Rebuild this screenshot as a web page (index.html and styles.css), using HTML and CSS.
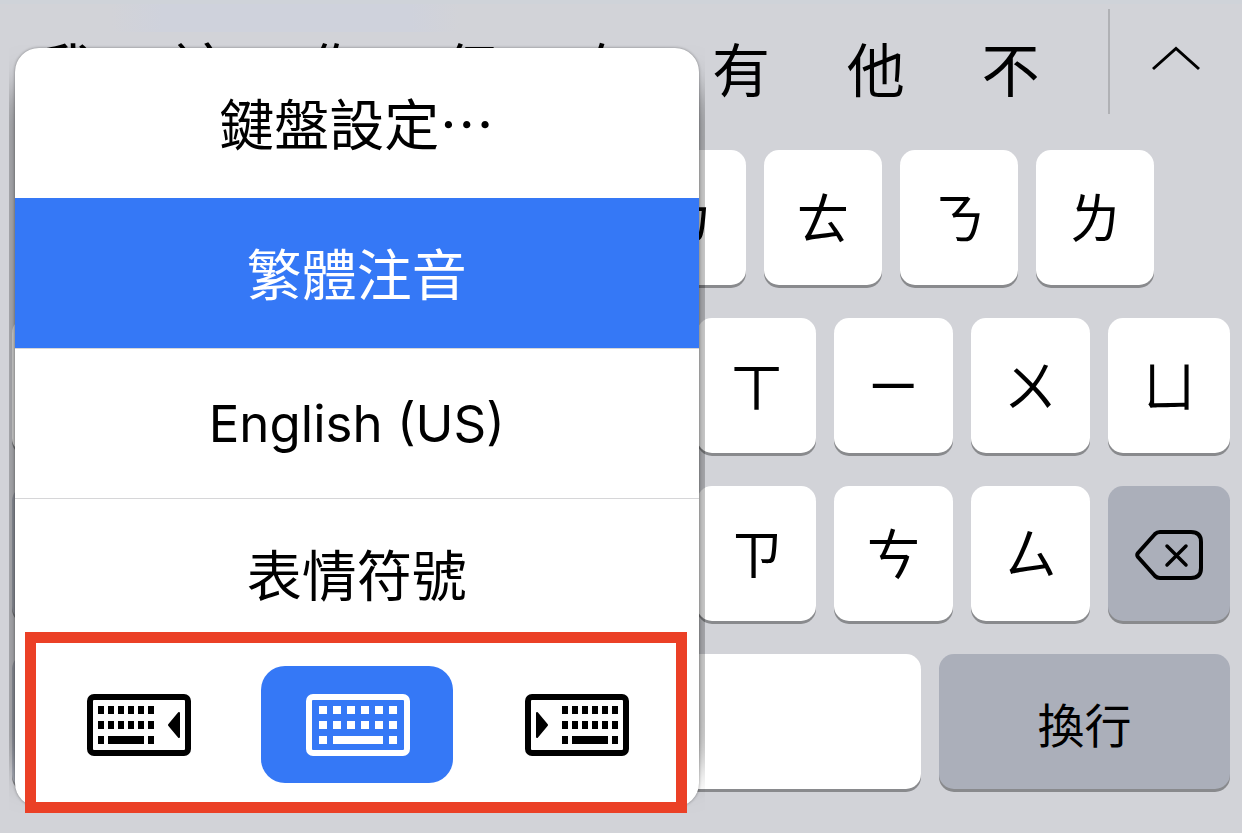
FILE: index.html
```html
<!DOCTYPE html>
<html lang="zh-Hant">
<head>
<meta charset="utf-8">
<meta name="viewport" content="width=device-width, initial-scale=1">
<title>注音鍵盤</title>
<link rel="stylesheet" href="styles.css">
</head>
<body>
<main class="keyboard">
  <div class="candidates">
    <div class="candidate-list">
      <button class="candidate">我</button>
      <button class="candidate">這</button>
      <button class="candidate">你</button>
      <button class="candidate">但</button>
      <button class="candidate">在</button>
      <button class="candidate">有</button>
      <button class="candidate">他</button>
      <button class="candidate">不</button>
    </div>
    <button class="expand" aria-label="展開">
      <svg width="50" height="26" viewBox="0 0 50 26"><path d="M2 24 25 3.500 48 24" fill="none" stroke="#000" stroke-width="3"/></svg>
    </button>
  </div>

  <div class="rows">
    <div class="row row-inset">
      <button class="key">ㄅ</button>
      <button class="key">ㄆ</button>
      <button class="key">ㄇ</button>
      <button class="key">ㄈ</button>
      <button class="key">ㄉ</button>
      <button class="key">ㄊ</button>
      <button class="key">ㄋ</button>
      <button class="key">ㄌ</button>
    </div>
    <div class="row">
      <button class="key">ㄍ</button>
      <button class="key">ㄎ</button>
      <button class="key">ㄏ</button>
      <button class="key">ㄐ</button>
      <button class="key">ㄑ</button>
      <button class="key">ㄒ</button>
      <button class="key">ㄧ</button>
      <button class="key">ㄨ</button>
      <button class="key">ㄩ</button>
    </div>
    <div class="row">
      <button class="key key-dark" aria-label="符號"></button>
      <button class="key">ㄓ</button>
      <button class="key">ㄔ</button>
      <button class="key">ㄕ</button>
      <button class="key">ㄖ</button>
      <button class="key">ㄗ</button>
      <button class="key">ㄘ</button>
      <button class="key">ㄙ</button>
      <button class="key key-dark" aria-label="刪除">
        <svg width="68" height="50" viewBox="0 0 68 50" fill="none" stroke="#000" stroke-width="4" stroke-linecap="round" stroke-linejoin="round"><path d="M25 2H56Q66 2 66 12V38Q66 48 56 48H25Q22 48 20 46L3 27Q1.500 25 3 23L20 4Q22 2 25 2Z"/><path d="M32 16 51 35M51 16 32 35" stroke-width="3.500"/></svg>
      </button>
    </div>
    <div class="row row-bottom">
      <button class="key key-dark" aria-label="數字"></button>
      <button class="key key-dark" aria-label="切換鍵盤"></button>
      <button class="key" aria-label="空格"></button>
      <button class="key key-dark key-return">換行</button>
    </div>
  </div>

  <div class="menu-layer">
    <div class="menu-clip">
      <div class="menu">
        <button class="menu-item">鍵盤設定⋯</button>
        <button class="menu-item selected">繁體注音</button>
        <button class="menu-item latin" lang="en">English (US)</button>
        <button class="menu-item">表情符號</button>
        <div class="modes">
          <button class="mode" aria-label="靠左鍵盤">
            <svg width="104" height="62" viewBox="0 0 104 62" fill="currentColor">
              <rect x="3" y="3" width="98" height="56" rx="4" fill="none" stroke="currentColor" stroke-width="6"/>
              <path d="M11 12h6v8h-6zM21 12h6v8h-6zM31 12h6v8h-6zM41 12h6v8h-6zM51 12h6v8h-6zM61 12h6v8h-6zM11 27h6v8h-6zM21 27h6v8h-6zM31 27h6v8h-6zM41 27h6v8h-6zM51 27h6v8h-6zM61 27h6v8h-6zM11 42h6v8h-6zM21 42h36v8H21zM61 42h6v8h-6z"/>
              <path d="M92 19V43L82 31Z" stroke="currentColor" stroke-width="2" stroke-linejoin="round"/>
            </svg>
          </button>
          <button class="mode selected" aria-label="標準鍵盤">
            <svg width="104" height="62" viewBox="0 0 104 62" fill="currentColor">
              <rect x="3" y="3" width="98" height="56" rx="4" fill="none" stroke="currentColor" stroke-width="6"/>
              <path d="M13 12h8v8h-8zM27 12h8v8h-8zM41 12h8v8h-8zM55 12h8v8h-8zM69 12h8v8h-8zM83 12h8v8h-8zM13 27h8v8h-8zM27 27h8v8h-8zM41 27h8v8h-8zM55 27h8v8h-8zM69 27h8v8h-8zM83 27h8v8h-8zM13 42h8v8h-8zM27 42h50v8H27zM83 42h8v8h-8z"/>
            </svg>
          </button>
          <button class="mode" aria-label="靠右鍵盤">
            <svg width="104" height="62" viewBox="0 0 104 62" fill="currentColor">
              <rect x="3" y="3" width="98" height="56" rx="4" fill="none" stroke="currentColor" stroke-width="6"/>
              <path d="M37 12h6v8h-6zM47 12h6v8h-6zM57 12h6v8h-6zM67 12h6v8h-6zM77 12h6v8h-6zM87 12h6v8h-6zM37 27h6v8h-6zM47 27h6v8h-6zM57 27h6v8h-6zM67 27h6v8h-6zM77 27h6v8h-6zM87 27h6v8h-6zM37 42h6v8h-6zM47 42h36v8H47zM87 42h6v8h-6z"/>
              <path d="M12 19V43L22 31Z" stroke="currentColor" stroke-width="2" stroke-linejoin="round"/>
            </svg>
          </button>
        </div>
      </div>
    </div>
    <div class="callout"></div>
  </div>
</main>
</body>
</html>
```

FILE: styles.css
```css
* {
  box-sizing: border-box;
}

body {
  margin: 0;
  background: #d2d3d8;
  color: #000;
  font-family: "Noto Sans CJK TC", sans-serif;
}

button {
  margin: 0;
  padding: 0;
  border: 0;
  background: none;
  color: inherit;
  font: inherit;
}

svg {
  display: block;
}

.keyboard {
  position: relative;
  min-height: 100vh;
  overflow: hidden;
  background:
    linear-gradient(#cfd3d9, #cfd3d9) 0 0 / 100% 4px no-repeat,
    linear-gradient(90deg, transparent 9%, #cfd2dc 13%, #cfd2dc 33%, transparent 37%) 0 0 / 100% 32px no-repeat,
    #d2d3d8;
}

.candidates {
  display: flex;
  height: 150px;
  padding: 9px 0 36px;
}

.candidate-list {
  display: flex;
  flex: 1;
  padding-right: 30px;
  border-right: 2px solid #b0b1b5;
}

.candidate {
  flex: 1;
  padding-top: 11px;
  font-size: 58px;
  line-height: 78px;
}

.expand {
  display: flex;
  justify-content: center;
  width: 132px;
  padding-top: 36px;
}

.rows {
  display: grid;
  gap: 33px;
  padding: 0 12px 44px;
}

.row {
  display: grid;
  grid-template-columns: repeat(8, 1fr) 122px;
  gap: 18px;
}

.row-inset {
  grid-template-columns: repeat(8, 1fr);
  padding: 0 76px 0 72px;
}

.row-bottom {
  grid-template-columns: 118px 118px 1fr 291px;
}

.key {
  display: flex;
  align-items: center;
  justify-content: center;
  height: 135px;
  padding-bottom: 4px;
  border-radius: 15px;
  background: #fff;
  box-shadow: 0 3px #898a8d;
  font-size: 54px;
  line-height: 64px;
}

.key-dark {
  padding: 3px 0 0;
  background: #abafba;
}

.key-return {
  font-size: 47px;
}

.menu-layer {
  position: absolute;
  top: 45px;
  left: 9px;
  width: 56%;
}

.menu-clip {
  position: relative;
  overflow: hidden;
  padding: 3px 6px 6px;
}

.menu-clip::before {
  position: absolute;
  inset: 40px 6px;
  border-radius: 24px;
  box-shadow: 0 0 36px rgba(0, 0, 0, 0.6);
  content: "";
}

.menu {
  position: relative;
  overflow: hidden;
  border-radius: 24px;
  background: #fff;
  box-shadow: 0 0 3px rgba(0, 0, 0, 0.4);
}

.menu-item {
  display: block;
  width: 100%;
  height: 150px;
  padding-bottom: 4px;
  font-size: 55px;
}

.menu-item:nth-child(3),
.menu-item:nth-child(4) {
  border-top: 1px solid #d6d6d8;
}

.menu-item.latin {
  padding-top: 4px;
  font-family: Inter, sans-serif;
  font-size: 51px;
}

.menu .selected {
  background: #3578f6;
  color: #fff;
}

.modes {
  display: grid;
  grid-template-columns: repeat(3, 1fr);
  gap: 27px;
  padding: 18px 26px 24px 27px;
}

.mode {
  display: flex;
  align-items: center;
  justify-content: center;
  height: 117px;
  padding-left: 2px;
  border-radius: 24px;
}

.callout {
  position: absolute;
  right: 18px;
  bottom: 0;
  left: 16px;
  height: 181px;
  border: 11px solid #eb4026;
  pointer-events: none;
}
```
